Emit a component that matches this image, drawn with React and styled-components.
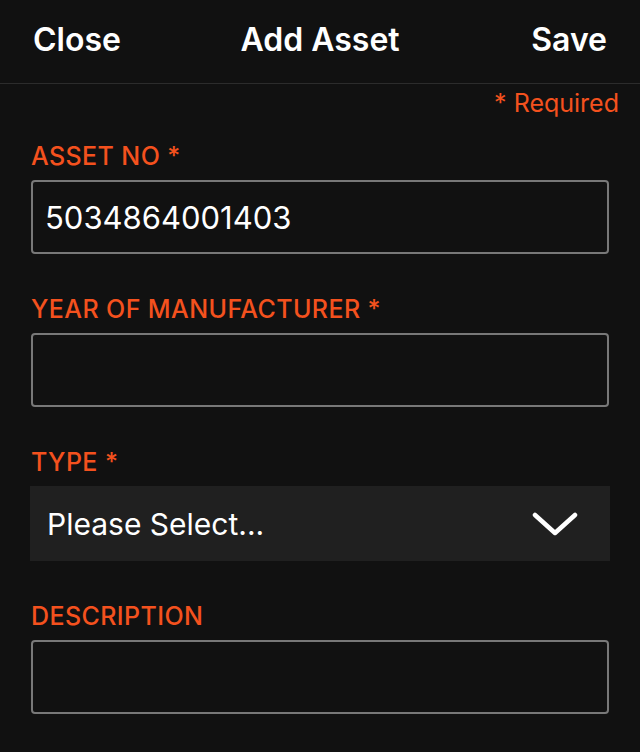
import React from "react";
import styled, { createGlobalStyle } from "styled-components";

const Global = createGlobalStyle`
  html, body { margin: 0; padding: 0; background: #111111; }
  body { font-family: Inter, Roboto, "Liberation Sans", sans-serif; -webkit-font-smoothing: antialiased; }
  * { box-sizing: border-box; }
`;

const Page = styled.div`
  width: 640px;
  min-height: 752px;
  background: #111111;
  color: #fff;
`;

const Header = styled.header`
  height: 84px;
  display: flex;
  align-items: center;
  justify-content: space-between;
  padding: 0 33px 4px 33px;
  border-bottom: 1px solid #2c2c2c;
  position: relative;
`;

const HeaderButton = styled.button`
  background: none;
  border: none;
  padding: 0;
  color: #fff;
  font-family: inherit;
  font-size: 32px;
  font-weight: 600;
`;

const Title = styled.h1`
  margin: 0;
  font-size: 32px;
  font-weight: 600;
  color: #fff;
  position: absolute;
  left: 50%;
  transform: translateX(-50%);
`;

const RequiredNote = styled.div`
  display: flex;
  justify-content: flex-end;
  padding: 4px 21px 0 0;
  color: #f4511e;
  font-size: 25px;
  line-height: 31px;
`;

const Form = styled.div`
  display: flex;
  flex-direction: column;
  padding: 20px 31px 0 31px;
`;

const Field = styled.div`
  display: flex;
  flex-direction: column;
  margin-bottom: 38px;
`;

const Label = styled.label`
  color: #f4511e;
  font-size: 25px;
  font-weight: 500;
  line-height: 34px;
  margin-bottom: 7px;
  letter-spacing: 0.4px;
`;

const Input = styled.div`
  height: 74px;
  border: 2px solid #787878;
  border-radius: 4px;
  display: flex;
  align-items: center;
  padding: 0 12px;
  font-size: 31px;
  color: #fff;
`;

const Select = styled.div`
  height: 75px;
  margin: 0 -1px;
  background: #202020;
  display: flex;
  align-items: center;
  justify-content: space-between;
  padding: 0 32px 0 17px;
  font-size: 30px;
  color: #fff;
`;

const fields = [
  { label: "ASSET NO *", value: "5034864001403" },
  { label: "YEAR OF MANUFACTURER *", value: "" },
  { label: "TYPE *", select: true },
  { label: "DESCRIPTION", value: "" },
];

export default function App() {
  return (
    <Page>
      <Global />
      <Header>
        <HeaderButton>Close</HeaderButton>
        <Title>Add Asset</Title>
        <HeaderButton>Save</HeaderButton>
      </Header>
      <RequiredNote>* Required</RequiredNote>
      <Form>
        {fields.map((f) => (
          <Field key={f.label}>
            <Label>{f.label}</Label>
            {f.select ? (
              <Select>
                <span>Please Select...</span>
                <svg width="46" height="26" viewBox="0 0 46 26">
                  <path d="M3 4 L23 22 L43 4" fill="none" stroke="#fff" strokeWidth="4.5" strokeLinecap="round" strokeLinejoin="round" />
                </svg>
              </Select>
            ) : (
              <Input>{f.value}</Input>
            )}
          </Field>
        ))}
      </Form>
    </Page>
  );
}
